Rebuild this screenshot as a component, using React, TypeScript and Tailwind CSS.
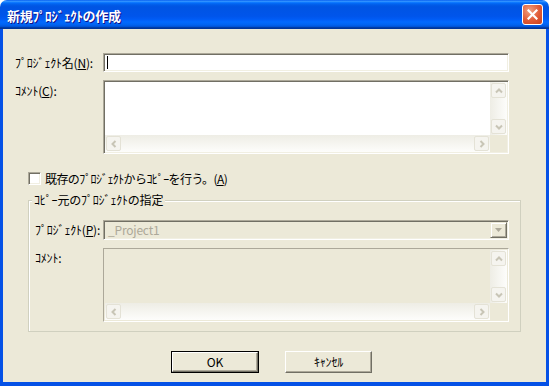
import React from "react";

const FONT = { fontFamily: '"Noto Sans CJK JP", "Noto Sans", sans-serif' };

type Dir = "up" | "down" | "left" | "right";

function Arrow({ dir, color = "#C8C5B6" }: { dir: Dir; color?: string }) {
  const pts = {
    up: "1,5.5 4,2.5 7,5.5",
    down: "1,2.5 4,5.5 7,2.5",
    left: "5.5,1 2.5,4 5.5,7",
    right: "2.5,1 5.5,4 2.5,7",
  }[dir];
  return (
    <svg width="8" height="8" viewBox="0 0 8 8">
      <polyline points={pts} fill="none" stroke={color} strokeWidth="2" />
    </svg>
  );
}

function SBtn({ dir }: { dir: Dir }) {
  return (
    <div className="w-[17px] h-[17px] p-px">
      <div className="w-full h-full flex items-center justify-center rounded-[2px] border border-[#E4E2D6] bg-[#F5F4EF]">
        <Arrow dir={dir} />
      </div>
    </div>
  );
}

function ScrollBox({ disabled }: { disabled?: boolean }) {
  return (
    <div
      className={
        "w-[406px] h-[74px] border border-t-[#ACA899] border-l-[#ACA899] border-b-white border-r-white p-px flex flex-col " +
        (disabled
          ? "bg-[#ECE9D8]"
          : "bg-white shadow-[inset_1px_1px_0_#716F64,inset_-1px_-1px_0_#F1EFE2]")
      }
    >
      <div className="flex flex-1 min-h-0">
        <div className={"flex-1 " + (disabled ? "bg-[#ECE9D8]" : "bg-white")} />
        <div className="w-[17px] flex flex-col justify-between bg-[linear-gradient(to_right,#EEEDE5,#FDFDFB)]">
          <SBtn dir="up" />
          <SBtn dir="down" />
        </div>
      </div>
      <div className="h-[17px] flex">
        <div className="flex-1 flex justify-between bg-[linear-gradient(to_bottom,#EEEDE5,#FDFDFB)]">
          <SBtn dir="left" />
          <SBtn dir="right" />
        </div>
        <div className="w-[17px] bg-[#ECE9D8]" />
      </div>
    </div>
  );
}

function Combo() {
  return (
    <div className="w-[406px] h-[20px] border border-t-[#ACA899] border-l-[#ACA899] border-b-white border-r-white shadow-[inset_1px_1px_0_#716F64,inset_-1px_-1px_0_#F1EFE2] p-px flex bg-[#ECE9D8]">
      <div className="flex-1 flex items-center pl-[3px] text-[12px] leading-[12px] text-[#ACA899]">
        _Project1
      </div>
      <div className="w-[17px] h-full border border-t-[#ECE9D8] border-l-[#ECE9D8] border-b-[#716F64] border-r-[#716F64] shadow-[inset_1px_1px_0_#FFFFFF,inset_-1px_-1px_0_#ACA899] flex items-center justify-center">
        <svg width="7" height="4" viewBox="0 0 7 4">
          <polygon points="0,0 7,0 3.5,4" fill="#ACA899" />
        </svg>
      </div>
    </div>
  );
}

function U({ children }: { children: React.ReactNode }) {
  return <span className="underline underline-offset-[1px]">{children}</span>;
}

export default function App() {
  return (
    <div className="w-[549px] h-[386px] flex flex-col bg-white" style={FONT}>
      {/* Title bar */}
      <div className="h-[29px] rounded-t-[7px] flex items-center pl-[7px] pr-[6px] bg-[linear-gradient(to_bottom,#0058EE_0%,#3593FF_4%,#288EFF_6%,#127DFF_8%,#036FFC_10%,#0262EE_14%,#0057E5_20%,#0054E3_24%,#0055EB_56%,#005BF5_66%,#026AFE_76%,#0062EF_86%,#0052D6_92%,#0040AB_94%,#003092_100%)]">
        <div className="flex-1 text-white font-bold text-[13px] leading-[13px] pt-[1px] tracking-[-0.3px] [text-shadow:1px_1px_0_#0F1089]">
          新規ﾌﾟﾛｼﾞｪｸﾄの作成
        </div>
        <div className="w-[21px] h-[21px] rounded-[3px] border border-white bg-[radial-gradient(circle_at_35%_30%,#F0A080,#E05A36_55%,#C8401C)] flex items-center justify-center">
          <svg width="11" height="11" viewBox="0 0 11 11">
            <path d="M1.5 1.5 L9.5 9.5 M9.5 1.5 L1.5 9.5" stroke="white" strokeWidth="2.2" strokeLinecap="square" />
          </svg>
        </div>
      </div>

      {/* Body */}
      <div className="flex-1 flex flex-col bg-[#ECE9D8] border-l-[3px] border-r-[3px] border-b-[4px] border-[#0551E6] text-[12px] leading-[12px] tracking-[-0.2px] text-black">
        {/* Row 1 */}
        <div className="flex items-center mt-[24px] pl-[12px]">
          <div className="w-[88px]">
            ﾌﾟﾛｼﾞｪｸﾄ名(<U>N</U>):
          </div>
          <div className="w-[406px] h-[19px] border border-t-[#ACA899] border-l-[#ACA899] border-b-white border-r-white shadow-[inset_1px_1px_0_#716F64,inset_-1px_-1px_0_#F1EFE2] bg-white flex items-center pl-[3px]">
            <div className="w-px h-[13px] bg-black" />
          </div>
        </div>

        {/* Row 2 */}
        <div className="flex mt-[8px] pl-[12px]">
          <div className="w-[88px] pt-[5px]">
            ｺﾒﾝﾄ(<U>C</U>):
          </div>
          <ScrollBox />
        </div>

        {/* Checkbox */}
        <div className="flex items-center mt-[18px] pl-[25px]">
          <div className="w-[13px] h-[13px] border border-t-[#ACA899] border-l-[#ACA899] border-b-white border-r-white shadow-[inset_1px_1px_0_#716F64,inset_-1px_-1px_0_#F1EFE2] bg-white" />
          <div className="ml-[4px] tracking-[-0.6px]">
            既存のﾌﾟﾛｼﾞｪｸﾄからｺﾋﾟｰを行う。(<U>A</U>)
          </div>
        </div>

        {/* Group */}
        <div className="relative mt-[15px] ml-[25px] w-[493px] h-[132px] border border-[#D0D0BF] shadow-[inset_1px_1px_0_#FFFFFF] flex flex-col pl-[6px]">
          <div className="absolute left-[3px] top-[-7px] px-[2px] bg-[#ECE9D8]">
            ｺﾋﾟｰ元のﾌﾟﾛｼﾞｪｸﾄの指定
          </div>
          <div className="flex items-center mt-[19px]">
            <div className="w-[68px]">
              ﾌﾟﾛｼﾞｪｸﾄ(<U>P</U>):
            </div>
            <Combo />
          </div>
          <div className="flex mt-[8px]">
            <div className="w-[68px] pt-[4px]">ｺﾒﾝﾄ:</div>
            <ScrollBox disabled />
          </div>
        </div>

        {/* Buttons */}
        <div className="flex mt-[19px] pl-[168px] gap-[26px]">
          <div className="w-[88px] h-[22px] border border-black flex">
            <div className="flex-1 border border-t-white border-l-white border-b-[#716F64] border-r-[#716F64] shadow-[inset_-1px_-1px_0_#ACA899] flex items-center justify-center">
              OK
            </div>
          </div>
          <div className="w-[87px] h-[22px] border border-t-white border-l-white border-b-[#716F64] border-r-[#716F64] shadow-[inset_-1px_-1px_0_#ACA899] flex items-center justify-center">
            ｷｬﾝｾﾙ
          </div>
        </div>
      </div>
    </div>
  );
}
